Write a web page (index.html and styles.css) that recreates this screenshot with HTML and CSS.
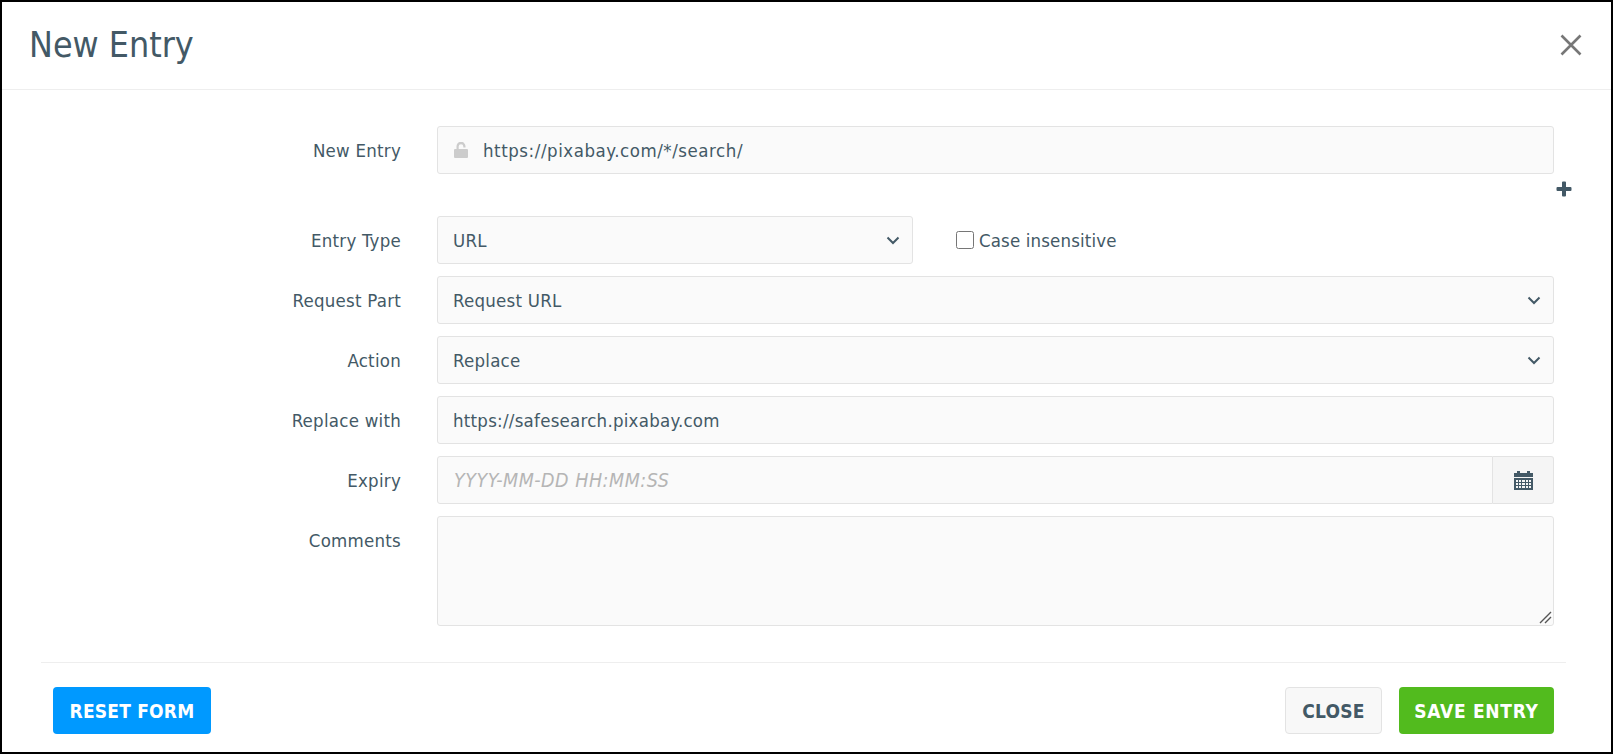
FILE: index.html
```html
<!DOCTYPE html>
<html lang="en">
<head>
    <meta charset="UTF-8">
    <title>New Entry</title>
    <link rel="stylesheet" href="styles.css">
</head>
<body>
    <div class="modal">
        <div class="modal-header">
            <h1>New Entry</h1>
            <button class="close-x" type="button" aria-label="Close">
                <svg width="22" height="22" viewBox="0 0 22 22"><path d="M1.500 1.500 20.500 20.500M20.500 1.500 1.500 20.500" stroke="#777" stroke-width="2.600" fill="none"/></svg>
            </button>
        </div>
        <form class="modal-body">
            <div class="row">
                <label class="row-label">New Entry</label>
                <div class="field has-icon">
                    <svg class="lock" width="14" height="16" viewBox="0 0 14 16"><path fill="#ccc" d="M0 8a1 1 0 0 1 1-1h1.500V4.500a4.500 4.500 0 0 1 9-.5v1.500h-2.200V4.500a2.300 2.300 0 0 0-4.600 0V7H13a1 1 0 0 1 1 1v7a1 1 0 0 1-1 1H1a1 1 0 0 1-1-1z"/></svg>
                    <input type="text" value="https://pixabay.com/*/search/">
                </div>
            </div>
            <div class="add-row">
                <svg width="16" height="16" viewBox="0 0 16 16"><path fill="#435966" d="M6 1.500a1 1 0 0 1 1-1h2a1 1 0 0 1 1 1V6h4.500a1 1 0 0 1 1 1v2a1 1 0 0 1-1 1H10v4.500a1 1 0 0 1-1 1H7a1 1 0 0 1-1-1V10H1.500a1 1 0 0 1-1-1V7a1 1 0 0 1 1-1H6z"/></svg>
            </div>
            <div class="row">
                <label class="row-label">Entry Type</label>
                <select class="short"><option>URL</option></select>
                <label class="check"><input type="checkbox"> Case insensitive</label>
            </div>
            <div class="row">
                <label class="row-label">Request Part</label>
                <select><option>Request URL</option></select>
            </div>
            <div class="row">
                <label class="row-label">Action</label>
                <select><option>Replace</option></select>
            </div>
            <div class="row">
                <label class="row-label">Replace with</label>
                <input type="text" value="https://safesearch.pixabay.com">
            </div>
            <div class="row">
                <label class="row-label">Expiry</label>
                <div class="input-group">
                    <input type="text" class="expiry" placeholder="YYYY-MM-DD HH:MM:SS">
                    <span class="addon">
                        <svg width="19" height="20" viewBox="0 0 19 20"><path fill="#435966" fill-rule="evenodd" d="M0 3h3V1h3v2h7V1h3v2h3v4H0zM0 8h19v12H0zM2 10v2h2v-2zM5 10v2h2v-2zM8 10v2h3v-2zM12 10v2h2v-2zM15 10v2h2v-2zM2 13v2h2v-2zM5 13v2h2v-2zM8 13v2h3v-2zM12 13v2h2v-2zM15 13v2h2v-2zM2 16v2h2v-2zM5 16v2h2v-2zM8 16v2h3v-2zM12 16v2h2v-2zM15 16v2h2v-2z"/></svg>
                    </span>
                </div>
            </div>
            <div class="row">
                <label class="row-label">Comments</label>
                <textarea></textarea>
            </div>
        </form>
        <div class="modal-footer">
            <button class="btn btn-blue" type="button">RESET FORM</button>
            <div class="footer-right">
                <button class="btn btn-light" type="button">CLOSE</button>
                <button class="btn btn-green" type="button">SAVE ENTRY</button>
            </div>
        </div>
    </div>
</body>
</html>
```

FILE: styles.css
```css
* {
    box-sizing: border-box;
}

html, body {
    height: 100%;
}

body {
    margin: 0;
    background-color: #fff;
    color: #435966;
    font-family: "DejaVu Sans Condensed", "DejaVu Sans", sans-serif;
    font-stretch: condensed;
    font-size: 18.5px;
    letter-spacing: 0.25px;
}

.modal {
    height: 754px;
    border: 2px solid #000;
    background-color: #fff;
}

.modal-header {
    display: flex;
    justify-content: space-between;
    align-items: center;
    height: 88px;
    padding: 0 29px 2px 27px;
    border-bottom: 1px solid #eee;
}

h1 {
    margin: 0;
    font-size: 35.5px;
    font-weight: normal;
    letter-spacing: 0;
}

.close-x {
    display: flex;
    padding: 0;
    border: none;
    background: none;
}

.modal-body {
    padding: 36px 57px 0 0;
}

.row {
    display: flex;
    align-items: flex-start;
    margin-bottom: 12px;
}

.row-label {
    flex: none;
    width: 399px;
    margin-right: 36px;
    padding-top: 14px;
    text-align: right;
}

input[type="text"], select, textarea {
    flex: 1;
    min-width: 0;
    height: 48px;
    padding: 0 15px;
    border: 1px solid #e3e3e3;
    border-radius: 3px;
    background-color: #fafafa;
    color: #435966;
    font: inherit;
    font-stretch: condensed;
    letter-spacing: inherit;
}

select {
    appearance: none;
    padding-top: 1px;
    background-image: url("data:image/svg+xml,%3Csvg xmlns='http://www.w3.org/2000/svg' width='14' height='9'%3E%3Cpath d='M1.500 1.500 7 7l5.500-5.500' stroke='%23435966' stroke-width='2' fill='none'/%3E%3C/svg%3E");
    background-repeat: no-repeat;
    background-position: right 12px center;
}

select.short {
    flex: none;
    width: 476px;
}

.check {
    display: flex;
    align-items: center;
    height: 48px;
    margin-left: 43px;
    letter-spacing: 0.15px;
}

.check input {
    width: 18px;
    height: 18px;
    margin: 0 5px 0 0;
}

.field {
    position: relative;
    flex: 1;
    display: flex;
}

.has-icon input {
    padding-left: 45px;
    letter-spacing: 0.55px;
}

.lock {
    position: absolute;
    left: 17px;
    top: 16px;
}

.add-row {
    display: flex;
    justify-content: flex-end;
    height: 35px;
    margin: -5px -18px 0 0;
}

.input-group {
    flex: 1;
    display: flex;
}

.input-group .expiry {
    padding-left: 16px;
    border-radius: 3px 0 0 3px;
    font-size: 19.5px;
    letter-spacing: 0.5px;
}

.expiry::placeholder {
    color: #b5b5b5;
    font-style: italic;
}

.addon {
    display: flex;
    align-items: center;
    justify-content: center;
    width: 61px;
    height: 48px;
    border: 1px solid #e3e3e3;
    border-left: none;
    border-radius: 0 3px 3px 0;
    background-color: #f5f5f5;
}

textarea {
    height: 110px;
    padding-top: 10px;
}

textarea::-webkit-resizer {
    background-repeat: no-repeat;
    background-image: url("data:image/svg+xml,%3Csvg xmlns='http://www.w3.org/2000/svg' width='15' height='15'%3E%3Cpath d='M2 13 13 2M7 13l6-6' stroke='%23555' stroke-width='1.400' fill='none'/%3E%3C/svg%3E");
}

.modal-footer {
    display: flex;
    justify-content: space-between;
    margin: 36px 45px 0 39px;
    padding: 24px 12px 0;
    border-top: 1px solid #eee;
}

.footer-right {
    display: flex;
    gap: 17px;
}

.btn {
    height: 47px;
    padding: 0;
    border: 1px solid transparent;
    border-radius: 4px;
    color: #fff;
    font: inherit;
    font-size: 19px;
    font-stretch: condensed;
    font-weight: bold;
    letter-spacing: 0.2px;
}

.btn-blue {
    width: 158px;
    background-color: #0099ff;
}

.btn-light {
    width: 97px;
    border-color: #e3e3e3;
    background-color: #f8f8f8;
    color: #435966;
}

.btn-green {
    width: 155px;
    background-color: #52bb1e;
    letter-spacing: 0.7px;
}
```
